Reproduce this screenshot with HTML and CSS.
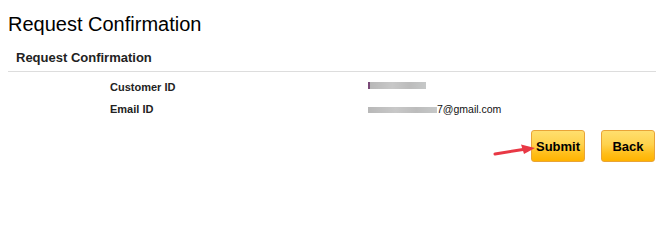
FILE: index.html
```html
<!DOCTYPE html>
<html>
<head>
<meta charset="utf-8">
<link rel="stylesheet" href="styles.css">
</head>
<body>
<h1 class="title">Request Confirmation</h1>
<div class="panel">
  <div class="panel-head">Request Confirmation</div>
  <div class="rows">
    <div class="row">
      <div class="label">Customer ID</div>
      <div class="value"><span class="blur blur-id"></span></div>
    </div>
    <div class="row">
      <div class="label">Email ID</div>
      <div class="value"><span class="blur blur-mail"></span>7@gmail.com</div>
    </div>
  </div>
  <div class="actions">
    <div class="btn-wrap">
      <svg class="arrow" width="44" height="14" viewBox="0 0 44 14">
        <path d="M2 11 L30 6.5" stroke="#e83845" stroke-width="3" stroke-linecap="round" fill="none"/>
        <path d="M42 5 L28 1.5 L31 11 Z" fill="#e83845"/>
      </svg>
      <button class="btn">Submit</button>
    </div>
    <button class="btn">Back</button>
  </div>
</div>
</body>
</html>
```
FILE: styles.css
```css
body {
  margin: 8px;
  font-family: "Liberation Sans", Arial, sans-serif;
  color: #000;
  background: #fff;
}
.title {
  font-size: 20px;
  font-weight: normal;
  margin: 4px 0 0 0;
  line-height: 24px;
  color: #000;
}
.panel {
  margin-top: 14px;
  margin-right: -8px;
}
.panel-head {
  font-size: 13px;
  font-weight: bold;
  color: #222;
  padding: 0 0 5px 8px;
  line-height: 16px;
  border-bottom: 1px solid #ddd;
}
.rows {
  padding: 8px 0 0 102px;
}
.row {
  display: flex;
  font-size: 11px;
  line-height: 14px;
  margin-bottom: 8px;
}
.label {
  width: 258px;
  font-weight: bold;
  color: #222;
}
.value {
  color: #111;
  display: flex;
  align-items: center;
  font-size: 10.5px;
}
.blur {
  display: inline-block;
  background: linear-gradient(90deg, #b8b8b8, #c8c8c8 40%, #bcbcbc 70%, #c6c8c8);
  filter: blur(0.6px);
}
.blur-id {
  width: 56px;
  height: 7px;
  border-left: 2px solid #7a4a78;
  margin-top: -4px;
}
.blur-mail {
  width: 69px;
  height: 6px;
  margin-top: 2px;
}
.actions {
  display: flex;
  justify-content: flex-end;
  gap: 16px;
  padding: 0 9px 0 0;
  margin-top: 14px;
}
.btn-wrap {
  position: relative;
}
.arrow {
  position: absolute;
  left: -38px;
  top: 13px;
  z-index: 2;
}
.btn {
  width: 54px;
  height: 32px;
  font-family: "Liberation Sans", Arial, sans-serif;
  font-size: 13px;
  font-weight: bold;
  color: #000;
  border: 1px solid #e9a437;
  border-radius: 3px;
  background: linear-gradient(180deg, #ffdf6e 0%, #ffd24d 45%, #ffbe1a 75%, #ffb300 100%);
  padding: 0;
}
```
